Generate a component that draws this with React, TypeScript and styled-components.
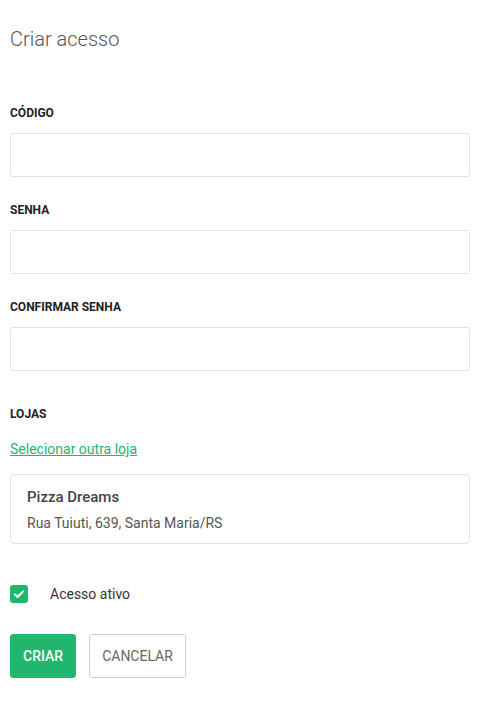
import React from "react";
import styled, { createGlobalStyle } from "styled-components";

const Global = createGlobalStyle`
  html, body { margin: 0; padding: 0; background: #fff; }
  body { font-family: Roboto, "Noto Sans", Arial, sans-serif; }
  * { box-sizing: border-box; }
`;

const GREEN = "#21b66e";

const Page = styled.div`
  padding: 27px 11px 40px 10px;
  display: flex;
  flex-direction: column;
`;

const Title = styled.h1`
  margin: 0 0 54px 0;
  font-size: 20px;
  line-height: 24px;
  font-weight: 300;
  color: #555;
`;

const Field = styled.div`
  display: flex;
  flex-direction: column;
  margin-bottom: 25px;
`;

const Label = styled.label`
  font-size: 12px;
  line-height: 16px;
  font-weight: 700;
  color: #222;
  margin-bottom: 12px;
`;

const Input = styled.input`
  height: 44px;
  width: 100%;
  border: 1px solid #e2e2e2;
  border-radius: 3px;
  padding: 0 12px;
  font-family: inherit;
  font-size: 14px;
  outline: none;
`;

const Section = styled.div`
  display: flex;
  flex-direction: column;
  margin-top: 10px;
`;

const SectionLabel = styled(Label)`
  margin-bottom: 17px;
`;

const Link = styled.a`
  font-size: 14px;
  line-height: 20px;
  color: ${GREEN};
  text-decoration: underline;
  align-self: flex-start;
  cursor: pointer;
  margin-bottom: 15px;
`;

const StoreCard = styled.div`
  border: 1px solid #e2e2e2;
  border-radius: 4px;
  padding: 12px 16px 10px 16px;
  display: flex;
  flex-direction: column;
  gap: 6px;
`;

const StoreName = styled.div`
  font-size: 15px;
  line-height: 20px;
  font-weight: 500;
  color: #444;
`;

const StoreAddress = styled.div`
  font-size: 14px;
  line-height: 20px;
  color: #555;
`;

const CheckRow = styled.div`
  display: flex;
  align-items: center;
  margin-top: 41px;
  gap: 22px;
`;

const Box = styled.span`
  width: 18px;
  height: 18px;
  border-radius: 3px;
  background: ${GREEN};
  display: inline-flex;
  align-items: center;
  justify-content: center;
`;

const CheckText = styled.span`
  font-size: 14px;
  line-height: 18px;
  color: #333;
`;

const Actions = styled.div`
  display: flex;
  gap: 13px;
  margin-top: 31px;
`;

const Button = styled.button<{ $primary?: boolean }>`
  height: 44px;
  padding: 0 12px;
  border-radius: 3px;
  font-family: inherit;
  font-size: 14px;
  font-weight: ${(p) => (p.$primary ? 500 : 400)};
  cursor: pointer;
  background: ${(p) => (p.$primary ? GREEN : "#fff")};
  color: ${(p) => (p.$primary ? "#fff" : "#666")};
  border: 1px solid ${(p) => (p.$primary ? GREEN : "#cfcfcf")};
`;

export default function App() {
  return (
    <>
      <Global />
      <Page>
        <Title>Criar acesso</Title>
        <Field>
          <Label>CÓDIGO</Label>
          <Input />
        </Field>
        <Field>
          <Label>SENHA</Label>
          <Input type="password" />
        </Field>
        <Field>
          <Label>CONFIRMAR SENHA</Label>
          <Input type="password" />
        </Field>
        <Section>
          <SectionLabel>LOJAS</SectionLabel>
          <Link>Selecionar outra loja</Link>
          <StoreCard>
            <StoreName>Pizza Dreams</StoreName>
            <StoreAddress>Rua Tuiuti, 639, Santa Maria/RS</StoreAddress>
          </StoreCard>
        </Section>
        <CheckRow>
          <Box>
            <svg width="14" height="14" viewBox="0 0 24 24" fill="none" stroke="#fff" strokeWidth="3.5" strokeLinecap="round" strokeLinejoin="round">
              <path d="M5 12.5l4.5 4.5L19 7.5" />
            </svg>
          </Box>
          <CheckText>Acesso ativo</CheckText>
        </CheckRow>
        <Actions>
          <Button $primary>CRIAR</Button>
          <Button>CANCELAR</Button>
        </Actions>
      </Page>
    </>
  );
}
